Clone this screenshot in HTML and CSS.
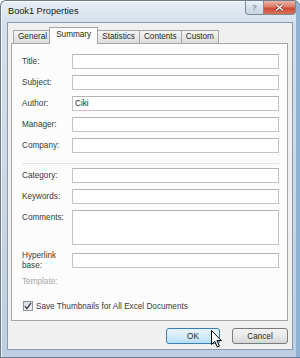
FILE: index.html
```html
<!DOCTYPE html>
<html lang="en">
<head>
    <meta name="viewport" content="width=device-width, initial-scale=1.0">
    <title>Book1 Properties</title>
    <link rel="stylesheet" href="styles.css">
</head>
<body>
    <div class="window">
        <div class="titlebar">
            <span class="title">Book1 Properties</span>
            <div class="caption-buttons">
                <span class="cap-btn help">?</span>
                <span class="cap-btn close">
                    <svg width="9" height="7" viewBox="0 0 9 7">
                        <path d="M1 0.5 L8 6.5 M8 0.5 L1 6.5" stroke="#7a2418" stroke-width="2.6" fill="none"/>
                        <path d="M1 0.5 L8 6.5 M8 0.5 L1 6.5" stroke="#fff" stroke-width="1.4" fill="none"/>
                    </svg>
                </span>
            </div>
        </div>

        <div class="client">
            <ul class="tabs">
                <li>General</li>
                <li class="active">Summary</li>
                <li>Statistics</li>
                <li>Contents</li>
                <li>Custom</li>
            </ul>

            <div class="panel">
                <div class="fields">
                    <div class="row"><label>Title:</label><input type="text"></div>
                    <div class="row"><label>Subject:</label><input type="text"></div>
                    <div class="row"><label>Author:</label><input type="text" value="Ciki"></div>
                    <div class="row"><label>Manager:</label><input type="text"></div>
                    <div class="row"><label>Company:</label><input type="text"></div>
                    <hr class="sep">
                    <div class="row"><label>Category:</label><input type="text"></div>
                    <div class="row"><label>Keywords:</label><input type="text"></div>
                    <div class="row tall"><label>Comments:</label><textarea></textarea></div>
                    <div class="row link"><label>Hyperlink<br>base:</label><input type="text"></div>
                    <div class="row template"><label>Template:</label></div>
                </div>

                <label class="check">
                    <span class="box">
                        <svg width="8" height="8" viewBox="0 0 8 8">
                            <path d="M1 4.2 L3 6.6 L7 0.8" stroke="#3b3f4c" stroke-width="1.4" fill="none"/>
                        </svg>
                    </span>
                    Save Thumbnails for All Excel Documents
                </label>
            </div>

            <div class="actions">
                <button class="ok">OK</button>
                <button>Cancel</button>
                <svg class="cursor" width="11" height="18" viewBox="0 0 11 18">
                    <path d="M0.5 0.5 L0.5 14.5 L3.8 11.4 L6.4 17 L8.4 16.1 L5.9 10.6 L10.3 10.6 Z" fill="#fff" stroke="#000" stroke-width="1"/>
                </svg>
            </div>
        </div>
    </div>
</body>
</html>
```

FILE: styles.css
```css
body {
    margin: 0;
    font-family: "Liberation Sans", Arial, sans-serif;
    font-size: 8.2px;
    color: #3a3a3a;
}

.window {
    width: 300px;
    height: 358px;
    box-sizing: border-box;
    display: flex;
    flex-direction: column;
    border: 1px solid #6d7d8e;
    border-right: none;
    border-radius: 6px 6px 0 0;
    background: linear-gradient(to bottom, #e8eef5, #d6e0eb 22px, #c8d6e5 60%, #bccfe2);
    box-shadow: inset -4px 0 0 #8fb2d3, inset -2px 0 0 #2f6e9f, inset 1px 1px 0 rgba(255, 255, 255, 0.7);
}

.titlebar {
    height: 21px;
    display: flex;
    align-items: flex-start;
}

.title {
    margin: 5px 0 0 7px;
    font-size: 9.2px;
    color: #1a1a1a;
}

.caption-buttons {
    margin-left: auto;
    margin-right: 4px;
    display: flex;
}

.cap-btn {
    height: 14px;
    box-sizing: border-box;
    display: flex;
    align-items: center;
    justify-content: center;
    border: 1px solid #7d8b99;
    border-top: none;
}

.help {
    width: 18px;
    border-right: none;
    border-radius: 0 0 0 4px;
    background: linear-gradient(to bottom, #eef3f8, #d6e0ea 50%, #c8d6e4);
    color: #7a8ea2;
    font-size: 8px;
    font-weight: bold;
}

.close {
    width: 33px;
    border-radius: 0 0 4px 0;
    background: linear-gradient(to bottom, #ebb5a8, #dc7a66 45%, #cc4a35 55%, #d9705a);
}

.client {
    flex: 1;
    margin: 0 7px 7px 6px;
    padding: 4px 4px 0 3px;
    display: flex;
    flex-direction: column;
    background-color: #f0f0f0;
    border: 1px solid #8a9bad;
}

.tabs {
    list-style-type: none;
    margin: 0 0 0 2px;
    padding: 0;
    height: 16px;
    display: flex;
    align-items: flex-end;
}

.tabs li {
    height: 13px;
    box-sizing: border-box;
    padding: 0 4px;
    line-height: 12px;
    border: 1px solid #a2a5ac;
    border-bottom: none;
    margin-right: -1px;
    background: linear-gradient(to bottom, #f5f5f5, #e8e8e8 50%, #dcdcdc);
    color: #2a2a2a;
}

.tabs li.active {
    height: 17px;
    padding: 0 6px;
    margin: 0 -1px -1px -2px;
    line-height: 13px;
    background: #fcfcfc;
    position: relative;
    z-index: 1;
}

.tabs li.active + li {
    margin-left: 0;
}

.panel {
    padding: 10px 8px 9px 10px;
    background-color: #fcfcfc;
    border: 1px solid #a2a5ac;
}

.fields {
    display: flex;
    flex-direction: column;
    gap: 6px;
}

.row {
    display: flex;
    align-items: center;
}

.row label {
    width: 50px;
    flex-shrink: 0;
}

.row input,
.row textarea {
    flex: 1;
    min-width: 0;
    height: 15px;
    box-sizing: border-box;
    margin: 0;
    padding: 0 2px;
    border: 1px solid #c4c4c4;
    border-top-color: #b4b4b4;
    background: #fff;
    font-family: inherit;
    font-size: 8.2px;
    color: #2a2a2a;
    outline: none;
}

.row.tall {
    align-items: flex-start;
}

.row.tall label {
    margin-top: 3px;
}

.row textarea {
    height: 35px;
    resize: none;
}

.row.link {
    align-items: flex-start;
}

.row.link label {
    line-height: 10px;
}

.row.link input {
    margin-top: 2px;
}

.row.template label {
    line-height: 10px;
    color: #a6a6a6;
}

.sep {
    margin: 4px 0 -2px;
    height: 1px;
    border: none;
    background-color: #e4e4e4;
}

.check {
    margin-top: 14px;
    height: 10px;
    display: flex;
    align-items: center;
    gap: 3px;
}

.box {
    width: 10px;
    height: 10px;
    box-sizing: border-box;
    margin-left: 1px;
    display: flex;
    align-items: center;
    justify-content: center;
    border: 1px solid #8f939a;
    background: linear-gradient(135deg, #d3d9e2, #f4f6f9);
}

.actions {
    position: relative;
    margin-top: 7px;
    display: flex;
    justify-content: flex-end;
    gap: 12px;
}

button {
    height: 16px;
    padding: 0;
    border: 1px solid #7a7a7a;
    border-radius: 3px;
    background: linear-gradient(to bottom, #f3f3f3, #e8e8e8 50%, #d6d6d6);
    font-family: inherit;
    font-size: 8.2px;
    color: #2a2a2a;
    width: 56px;
}

button.ok {
    width: 54px;
    border-color: #3c7fb1;
    background: linear-gradient(to bottom, #e6f4fc, #d3ecfa 50%, #b6def5);
}

.cursor {
    position: absolute;
    left: 200px;
    top: 2px;
}
```
